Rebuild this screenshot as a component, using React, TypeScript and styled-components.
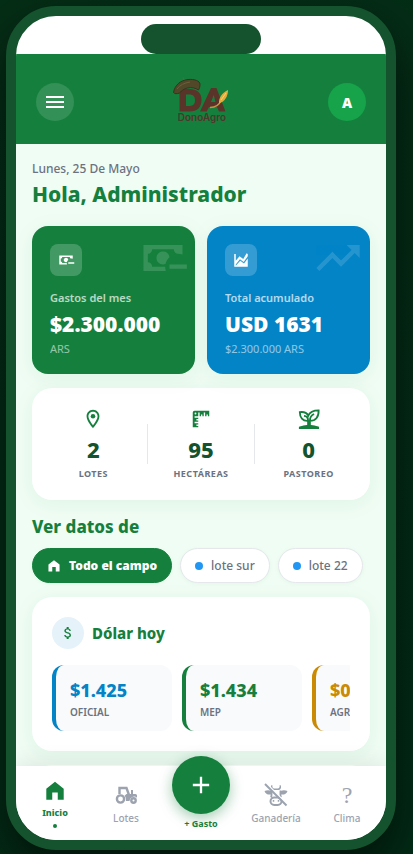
import React from "react";
import styled, { createGlobalStyle } from "styled-components";
import { MdMenu, MdTrendingUp, MdOutlineLocationOn, MdAttachMoney, MdAdd } from "react-icons/md";

const Global = createGlobalStyle`
  *, *::before, *::after { box-sizing: border-box; }
  html, body, #root { height: 100%; }
  body {
    margin: 0;
    background: #052e16;
    font-family: "Noto Sans", "Open Sans", sans-serif;
    color: #14532d;
  }
  button { font-family: inherit; border: 0; padding: 0; cursor: pointer; }
  h1, h2, h3, p { margin: 0; }
`;

const Stage = styled.div`
  height: 100%;
  padding: 6px 17px 4px 6px;
  overflow: hidden;
  background: linear-gradient(135deg, #052e16, #022c16 100%);
`;

const Phone = styled.div`
  display: flex;
  flex-direction: column;
  height: 100%;
  border: 10px solid #14532d;
  border-radius: 50px;
  overflow: hidden;
  background: #fff;
  box-shadow: 0 20px 50px rgba(0, 0, 0, 0.6);
`;

const StatusBar = styled.div`
  display: flex;
  flex: none;
  justify-content: center;
  padding-top: 8px;
`;

const Notch = styled.div`
  width: 120px;
  height: 30px;
  border-radius: 15px;
  background: #14532d;
`;

const Header = styled.header`
  display: flex;
  flex: none;
  align-items: center;
  justify-content: space-between;
  height: 90px;
  padding: 6px 20px 0;
  background: #15803d;
`;

const RoundButton = styled.button<{ $solid?: boolean }>`
  display: flex;
  align-items: center;
  justify-content: center;
  width: 38px;
  height: 38px;
  border-radius: 50%;
  color: #fff;
  font-size: 14px;
  font-weight: 900;
  background: ${(p) => (p.$solid ? "#16a34a" : "rgba(255, 255, 255, 0.13)")};
`;

const Content = styled.main`
  display: flex;
  flex: 1;
  flex-direction: column;
  min-height: 0;
  padding: 16px 16px 0;
  overflow: hidden;
  background: #f0fdf4;
`;

const DateLine = styled.p`
  font-size: 12px;
  line-height: 18px;
  font-weight: 500;
  color: #6b7280;
`;

const Greeting = styled.h1`
  margin-bottom: 16px;
  font-size: 21px;
  line-height: 32px;
  font-weight: 800;
  color: #15803d;
`;

const SummaryGrid = styled.section`
  display: grid;
  flex: none;
  grid-template-columns: 1fr 1fr;
  gap: 12px;
`;

const SummaryCard = styled.article<{ $color: string }>`
  position: relative;
  height: 148px;
  padding: 18px;
  border-radius: 16px;
  color: #fff;
  background: ${(p) => p.$color};
  box-shadow: 0 4px 20px rgba(21, 128, 61, 0.08);
`;

const IconTile = styled.div`
  display: flex;
  align-items: center;
  justify-content: center;
  width: 32px;
  height: 32px;
  margin-bottom: 13px;
  border-radius: 8px;
  background: rgba(255, 255, 255, 0.2);
`;

const Watermark = styled.div`
  position: absolute;
  top: 6px;
  right: 6px;
  display: flex;
  opacity: 0.14;
`;

const SummaryLabel = styled.p`
  font-size: 11px;
  line-height: 18px;
  font-weight: 600;
  opacity: 0.7;
`;

const SummaryValue = styled.p`
  font-size: 21px;
  line-height: 34px;
  font-weight: 900;
  white-space: nowrap;
`;

const SummaryNote = styled.p`
  font-size: 11px;
  line-height: 16px;
  opacity: 0.55;
`;

const StatsCard = styled.section`
  display: flex;
  flex: none;
  align-items: center;
  height: 112px;
  margin-top: 14px;
  padding: 0 8px;
  border-radius: 20px;
  background: #fff;
  box-shadow: 0 4px 20px rgba(21, 128, 61, 0.08);
`;

const Stat = styled.div`
  display: flex;
  flex: 1;
  flex-direction: column;
  align-items: center;
  padding-top: 2px;
  color: #15803d;
`;

const StatValue = styled.strong`
  margin-top: 3px;
  font-size: 22px;
  line-height: 32px;
  font-weight: 800;
  color: #14532d;
`;

const StatLabel = styled.span`
  font-size: 9px;
  line-height: 18px;
  font-weight: 700;
  letter-spacing: 0.5px;
  color: #6b7280;
`;

const Divider = styled.div`
  width: 1px;
  height: 40px;
  background: #e5e7eb;
`;

const SectionTitle = styled.h2`
  margin: 14px 0 8px;
  font-size: 17px;
  line-height: 26px;
  font-weight: 800;
  color: #15803d;
`;

const Chips = styled.div`
  display: flex;
  flex: none;
  gap: 8px;
`;

const Chip = styled.button<{ $active?: boolean }>`
  display: flex;
  align-items: center;
  gap: 8px;
  height: 35px;
  padding: 0 14px;
  border: 1px solid ${(p) => (p.$active ? "#15803d" : "#e5e7eb")};
  border-radius: 18px;
  font-size: 12px;
  font-weight: ${(p) => (p.$active ? 900 : 500)};
  white-space: nowrap;
  color: ${(p) => (p.$active ? "#fff" : "#6b7280")};
  background: ${(p) => (p.$active ? "#15803d" : "#fff")};
  box-shadow: 0 1px 4px rgba(21, 128, 61, 0.06);
`;

const Dot = styled.span`
  width: 8px;
  height: 8px;
  border-radius: 50%;
  background: #2196f3;
`;

const RatesCard = styled.section`
  flex: none;
  height: 154px;
  margin-top: 14px;
  padding: 20px;
  border-radius: 20px;
  background: #fff;
  box-shadow: 0 4px 20px rgba(21, 128, 61, 0.08);
`;

const RatesHeader = styled.div`
  display: flex;
  align-items: center;
  gap: 8px;
  margin-bottom: 16px;
  color: #15803d;
`;

const RatesIcon = styled.div`
  display: flex;
  align-items: center;
  justify-content: center;
  width: 32px;
  height: 32px;
  border-radius: 50%;
  background: #e5f2fa;
`;

const RatesTitle = styled.h3`
  font-size: 15px;
  line-height: 22px;
  font-weight: 800;
`;

const RateList = styled.div`
  display: flex;
  gap: 10px;
  overflow-x: auto;
  scrollbar-width: none;
`;

const Rate = styled.div<{ $color: string }>`
  flex: none;
  width: 120px;
  height: 66px;
  padding: 12px 14px;
  border-left: 4px solid ${(p) => p.$color};
  border-radius: 12px;
  color: ${(p) => p.$color};
  background: #f9fafb;
`;

const RateValue = styled.p`
  font-size: 18px;
  line-height: 26px;
  font-weight: 800;
`;

const RateLabel = styled.p`
  font-size: 10px;
  line-height: 18px;
  font-weight: 600;
  color: #6b7280;
`;

const NextCard = styled.div`
  flex: none;
  height: 80px;
  margin-top: 14px;
  border-radius: 20px;
  background: #fff;
`;

const TabBar = styled.nav`
  position: relative;
  display: grid;
  flex: none;
  grid-template-columns: 78fr 64fr 86fr 64fr 78fr;
  height: 74px;
  background: #fff;
  box-shadow: 0 -4px 20px rgba(0, 0, 0, 0.08);
`;

const Tab = styled.button<{ $active?: boolean }>`
  display: flex;
  flex-direction: column;
  align-items: center;
  justify-content: center;
  gap: 4px;
  padding-top: 2px;
  font-size: ${(p) => (p.$active ? 9 : 10)}px;
  line-height: 14px;
  font-weight: ${(p) => (p.$active ? 800 : 500)};
  color: ${(p) => (p.$active ? "#15803d" : "#9ca3af")};
  background: transparent;
`;

const ActiveDot = styled.span`
  width: 4px;
  height: 4px;
  border-radius: 50%;
  background: #15803d;
`;

const AddTab = styled.button`
  display: flex;
  flex-direction: column;
  align-items: center;
  gap: 3px;
  margin-top: -10px;
  font-size: 9px;
  line-height: 14px;
  font-weight: 700;
  color: #15803d;
  background: transparent;
`;

const AddCircle = styled.span`
  display: flex;
  align-items: center;
  justify-content: center;
  width: 58px;
  height: 58px;
  border-radius: 50%;
  color: #fff;
  background: #15803d;
  box-shadow: 0 4px 14px rgba(21, 128, 61, 0.4);
`;

const QuestionGlyph = styled.span`
  font-family: "Liberation Serif", serif;
  font-size: 24px;
  line-height: 24px;
  font-weight: 400;
`;

const Svg = ({ size, children }: { size: number; children: React.ReactNode }) => (
  <svg width={size} height={size} viewBox="0 0 24 24" fill="currentColor" aria-hidden="true">{children}</svg>
);

const CashIcon = ({ size }: { size: number }) => (
  <Svg size={size}>
    <path d="M15 15v2h8v-2zM14.97 11.61C14.85 10.28 13.59 8.97 12 9c-1.7.03-3 1.3-3 3s1.3 2.94 3 3c.38 0 .77-.08 1.14-.23.27-1.1.86-2.24 1.83-3.16M13 16H7a2 2 0 0 0-2-2v-4a2 2 0 0 0 2-2h10a2 2 0 0 0 2 2c.7 0 1.35.15 2 .4V6H3v12h10.3c-.2-.65-.3-1.33-.3-2" />
  </Svg>
);

const ChartIcon = () => (
  <Svg size={18}>
    <path d="M3 4h2v9l5-6 5 3.500L19.500 3 21 4v3l-5.400 7.500-5-3.500L5 18v1.500l6-6.500 5 3.500L21 10v11H3z" />
  </Svg>
);

const RulerIcon = () => (
  <Svg size={22}>
    <path d="M3 5v16h6v-1.500H7V18h2v-1.500H5V15h4v-1.500H7V12h2v-1.500H5V9h4V5h1.500v4H12V7h1.500v2H15V5h1.500v4H18V7h1.500v2H21V3H5a2 2 0 0 0-2 2m3 2a1 1 0 1 1 0-2 1 1 0 0 1 0 2" />
  </Svg>
);

const SproutIcon = () => (
  <Svg size={22}>
    <path d="M1 23v-2.500S6 18.500 12 18.500s11 2 11 2V23z" />
    <path d="M11 19v-5.500M13 19v-5.500M11 14C5 14.500 2 10 2 4.500c4-.5 7.500.5 9.200 3.800C13 4 17 2.500 22.500 2.500c.3 7-3 11.500-9.500 11.500M6.500 8.500c3 .3 4.500 2 4.500 5M13 13.500c0-3.200 1.500-5.500 4.500-7" fill="none" stroke="currentColor" strokeWidth="2" />
  </Svg>
);

const HomeIcon = ({ size }: { size: number }) => (
  <Svg size={size}><path d="M12 2 2.500 9.500V21.500h6.500v-8h6v8h6.500V9.500z" /></Svg>
);

const TractorIcon = () => (
  <Svg size={24}>
    <g fill="none" stroke="currentColor" strokeWidth="2.400">
      <circle cx="6.500" cy="16" r="3.600" />
      <circle cx="19.500" cy="17.500" r="2.200" />
      <path d="M5.500 11V5h7l2.500 7" />
    </g>
    <path d="M12.500 11H17V7h2v4h2.500a1.500 1.500 0 0 1 1.500 1.500v2.300a4.500 4.500 0 0 0-7.500 3.200h-3.700c.4-2-.1-3.800-1.300-5.200z" />
  </Svg>
);

const CowOffIcon = () => (
  <Svg size={24}>
    <path d="M7.500 2c-1.200 2.200-.5 4.200 1.500 5h6c2-.8 2.700-2.800 1.500-5l-1 .4c.5 1.700-.3 2.700-1.800 3h-3.400c-1.500-.3-2.300-1.300-1.800-3z" />
    <path d="M.5 8C3 7 5.500 7 7.500 8.200L7 11.500C4 12 1.500 11 .5 8M23.500 8c-2.500-1-5-1-7 .2l.5 3.300c3 .5 5.500-.5 6.500-3.500" />
    <path d="M7.500 7.500c.2 3.500.2 5.500-.5 7M16.500 7.500c-.2 3.500-.2 5.500.5 7" fill="none" stroke="currentColor" strokeWidth="1.800" />
    <rect x="6.500" y="14.500" width="11" height="7.500" rx="3.700" fill="none" stroke="currentColor" strokeWidth="2" />
    <path d="M9.500 17v1.800M14.500 17v1.800" stroke="currentColor" strokeWidth="1.500" />
    <path d="m2.500.5 21 21" stroke="#fff" strokeWidth="1.500" />
    <path d="M1 1 22.500 22.500" stroke="currentColor" strokeWidth="2" />
  </Svg>
);

const LogoSvg = styled.svg`
  display: block;
  margin-top: -2px;
`;

const Logo = () => (
  <LogoSvg width="60" height="48" viewBox="0 0 60 48" role="img" aria-label="DonoAgro">
    <path fillRule="evenodd" fill="#5a3428" d="M8.500 12h10c8 0 12 4 12 11s-4 11.500-12 11.500h-10zM15 17.500V29h3.500c3.700 0 5.500-2 5.500-5.700s-1.800-5.800-5.500-5.800zM29 34.500l11-23.500h5.500l9 23.500H48l-2-4.500h-8l-2.300 4.500zM40 25h4.500L42.700 18z" />
    <path fill="#51482a" stroke="#3a321e" d="M2.500 15.500C4 8 9 3.500 17 2.500c6-.7 12 1.500 12 4.500 0 2.500-.5 4.500-1.500 6-3-2-7-3-11-2-4 .8-6 3-8 5-2.500 1-5 1-6-.5z" />
    <path d="M12 .5 13 3M6 12c3-4 7-6 13-7" fill="none" stroke="#6b6039" strokeWidth="1" />
    <path d="M39 30.500c6 0 9-2 11-7" fill="none" stroke="#c09545" strokeWidth="1.500" />
    <path fill="#e4ac3d" d="M48 26.500c-.5-5 2.500-10.500 9-13.500 0 6-3 11.500-9 13.500z" />
    <path d="m50 23 5-7" stroke="#f5d477" strokeWidth="1" />
    <text x="31" y="44" textAnchor="middle" fontFamily="Inter, sans-serif" fontSize="10" fontWeight="600" fill="#50372a">DonoAgro</text>
  </LogoSvg>
);

const rates = [
  { value: "$1.425", label: "OFICIAL", color: "#0284c7" },
  { value: "$1.434", label: "MEP", color: "#15803d" },
  { value: "$0", label: "AGRO", color: "#ca8a04" },
];

export default function App() {
  return (
    <Stage>
      <Global />
      <Phone>
        <StatusBar><Notch /></StatusBar>
        <Header>
          <RoundButton aria-label="Menú"><MdMenu size={24} /></RoundButton>
          <Logo />
          <RoundButton $solid>A</RoundButton>
        </Header>
        <Content>
          <DateLine>Lunes, 25 De Mayo</DateLine>
          <Greeting>Hola, Administrador</Greeting>
          <SummaryGrid>
            <SummaryCard $color="#15803d">
              <Watermark><CashIcon size={52} /></Watermark>
              <IconTile><CashIcon size={18} /></IconTile>
              <SummaryLabel>Gastos del mes</SummaryLabel>
              <SummaryValue>$2.300.000</SummaryValue>
              <SummaryNote>ARS</SummaryNote>
            </SummaryCard>
            <SummaryCard $color="#0284c7">
              <Watermark><MdTrendingUp size={52} /></Watermark>
              <IconTile><ChartIcon /></IconTile>
              <SummaryLabel>Total acumulado</SummaryLabel>
              <SummaryValue>USD 1631</SummaryValue>
              <SummaryNote>$2.300.000 ARS</SummaryNote>
            </SummaryCard>
          </SummaryGrid>
          <StatsCard>
            <Stat><MdOutlineLocationOn size={22} /><StatValue>2</StatValue><StatLabel>LOTES</StatLabel></Stat>
            <Divider />
            <Stat><RulerIcon /><StatValue>95</StatValue><StatLabel>HECTÁREAS</StatLabel></Stat>
            <Divider />
            <Stat><SproutIcon /><StatValue>0</StatValue><StatLabel>PASTOREO</StatLabel></Stat>
          </StatsCard>
          <SectionTitle>Ver datos de</SectionTitle>
          <Chips>
            <Chip $active><HomeIcon size={14} />Todo el campo</Chip>
            <Chip><Dot />lote sur</Chip>
            <Chip><Dot />lote 22</Chip>
          </Chips>
          <RatesCard>
            <RatesHeader>
              <RatesIcon><MdAttachMoney size={16} /></RatesIcon>
              <RatesTitle>Dólar hoy</RatesTitle>
            </RatesHeader>
            <RateList>
              {rates.map((r) => (
                <Rate key={r.label} $color={r.color}>
                  <RateValue>{r.value}</RateValue>
                  <RateLabel>{r.label}</RateLabel>
                </Rate>
              ))}
            </RateList>
          </RatesCard>
          <NextCard />
        </Content>
        <TabBar>
          <Tab $active><HomeIcon size={22} />Inicio<ActiveDot /></Tab>
          <Tab><TractorIcon />Lotes</Tab>
          <AddTab><AddCircle><MdAdd size={28} /></AddCircle>+ Gasto</AddTab>
          <Tab><CowOffIcon />Ganadería</Tab>
          <Tab><QuestionGlyph>?</QuestionGlyph>Clima</Tab>
        </TabBar>
      </Phone>
    </Stage>
  );
}
